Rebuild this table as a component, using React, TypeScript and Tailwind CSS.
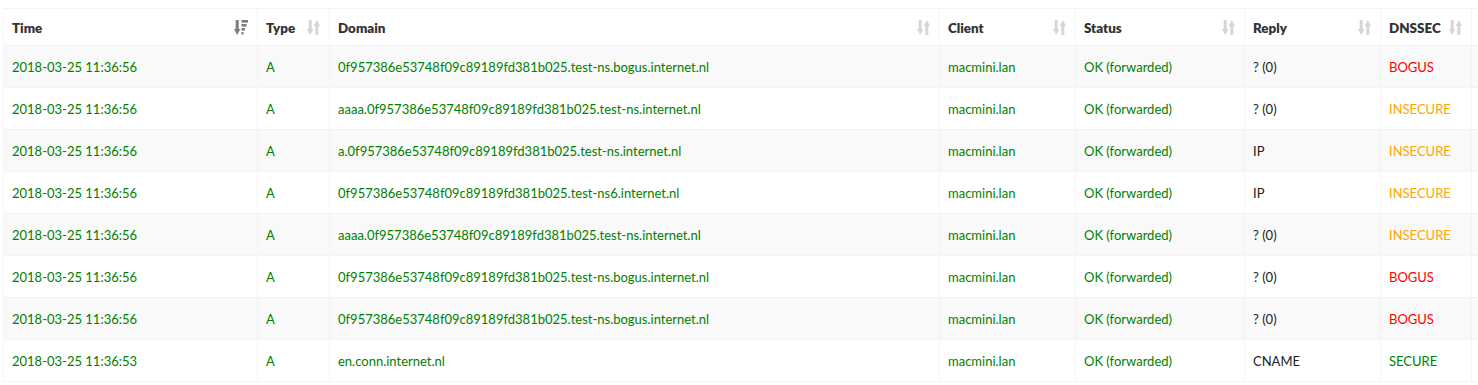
import React from 'react';

type Row = {
  time: string;
  domain: string;
  reply: string;
  dnssec: 'BOGUS' | 'INSECURE' | 'SECURE';
};

const rows: Row[] = [
  { time: '2018-03-25 11:36:56', domain: '0f957386e53748f09c89189fd381b025.test-ns.bogus.internet.nl', reply: '? (0)', dnssec: 'BOGUS' },
  { time: '2018-03-25 11:36:56', domain: 'aaaa.0f957386e53748f09c89189fd381b025.test-ns.internet.nl', reply: '? (0)', dnssec: 'INSECURE' },
  { time: '2018-03-25 11:36:56', domain: 'a.0f957386e53748f09c89189fd381b025.test-ns.internet.nl', reply: 'IP', dnssec: 'INSECURE' },
  { time: '2018-03-25 11:36:56', domain: '0f957386e53748f09c89189fd381b025.test-ns6.internet.nl', reply: 'IP', dnssec: 'INSECURE' },
  { time: '2018-03-25 11:36:56', domain: 'aaaa.0f957386e53748f09c89189fd381b025.test-ns.internet.nl', reply: '? (0)', dnssec: 'INSECURE' },
  { time: '2018-03-25 11:36:56', domain: '0f957386e53748f09c89189fd381b025.test-ns.bogus.internet.nl', reply: '? (0)', dnssec: 'BOGUS' },
  { time: '2018-03-25 11:36:56', domain: '0f957386e53748f09c89189fd381b025.test-ns.bogus.internet.nl', reply: '? (0)', dnssec: 'BOGUS' },
  { time: '2018-03-25 11:36:53', domain: 'en.conn.internet.nl', reply: 'CNAME', dnssec: 'SECURE' },
];

const dnssecColor = {
  BOGUS: 'text-[#ff0000]',
  INSECURE: 'text-[#ffa500]',
  SECURE: 'text-[#008000]',
};

// both-ways sort icon (inactive)
function SortBoth() {
  return (
    <svg width="13" height="15" viewBox="0 0 13 15" className="shrink-0">
      <g fill="#d6d6d6">
        <rect x="1.7" y="0" width="3" height="10" />
        <path d="M0 9 L6.4 9 L3.2 15 Z" />
        <rect x="8.3" y="5" width="3" height="10" />
        <path d="M6.6 6 L13 6 L9.8 0 Z" />
      </g>
    </svg>
  );
}

// active descending sort icon
function SortDesc() {
  return (
    <svg width="14" height="15" viewBox="0 0 14 15" className="shrink-0">
      <g fill="#7d7d7d">
        <rect x="1.7" y="0" width="3" height="10" />
        <path d="M0 9 L6.4 9 L3.2 15 Z" />
        <rect x="7.5" y="0" width="6.5" height="2.6" />
        <rect x="7.5" y="4" width="5" height="2.6" />
        <rect x="7.5" y="8" width="3.5" height="2.6" />
        <rect x="7.5" y="12" width="2" height="2.6" />
      </g>
    </svg>
  );
}

const headers: { label: string; w: string; active?: boolean }[] = [
  { label: 'Time', w: 'w-[254px]', active: true },
  { label: 'Type', w: 'w-[72px]' },
  { label: 'Domain', w: 'w-[610px]' },
  { label: 'Client', w: 'w-[136px]' },
  { label: 'Status', w: 'w-[169px]' },
  { label: 'Reply', w: 'w-[136px]' },
  { label: 'DNSSEC', w: 'w-[91px]' },
];

const cell = 'border border-[#f4f4f4] px-2 pt-[2px]';

export default function App() {
  return (
    <div className="w-[1478px] h-[385px] overflow-hidden bg-white pl-[3px] pt-[8px] font-['Lato','Noto_Sans',sans-serif] text-[13px] text-[#333]">
      <table className="table-fixed border-collapse w-[1540px]">
        <colgroup>
          {headers.map((h) => (
            <col key={h.label} className={h.w} />
          ))}
          <col className="w-[72px]" />
        </colgroup>
        <thead>
          <tr className="h-[37px]">
            {headers.map((h) => (
              <th key={h.label} className="border border-[#f4f4f4] pl-2 pr-[9px] pt-[2px] text-left text-[13.4px] font-extrabold text-[#333]">
                <div className="flex items-center justify-between gap-2">
                  <span>{h.label}</span>
                  {h.active ? <SortDesc /> : <SortBoth />}
                </div>
              </th>
            ))}
            <th className="border border-[#f4f4f4]" />
          </tr>
        </thead>
        <tbody>
          {rows.map((r, i) => (
            <tr key={i} className={`h-[42px] ${i % 2 === 0 ? 'bg-[#f9f9f9]' : 'bg-white'}`}>
              <td className={`${cell} text-[#008000]`}>{r.time}</td>
              <td className={`${cell} text-[#008000]`}>A</td>
              <td className={`${cell} text-[#008000]`}>{r.domain}</td>
              <td className={`${cell} text-[#008000]`}>macmini.lan</td>
              <td className={`${cell} text-[#008000]`}>OK (forwarded)</td>
              <td className={`${cell} text-[#222]`}>{r.reply}</td>
              <td className={`${cell} ${dnssecColor[r.dnssec]}`}>{r.dnssec}</td>
              <td className="border border-[#f4f4f4]" />
            </tr>
          ))}
        </tbody>
      </table>
    </div>
  );
}
